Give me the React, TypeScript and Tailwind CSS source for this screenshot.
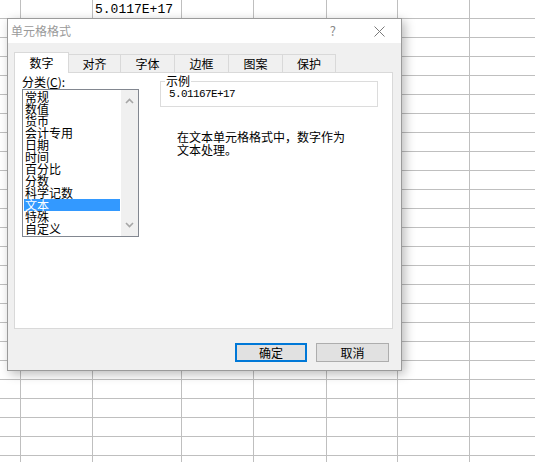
import React from 'react';

const COLS = [21, 72, 89, 72, 73, 71, 72, 120];
const ROWS = 25;

const ITEMS = ['常规', '数值', '货币', '会计专用', '日期', '时间', '百分比', '分数', '科学记数', '文本', '特殊', '自定义'];
const TABS = ['数字', '对齐', '字体', '边框', '图案', '保护'];
const TAB_W = [55, 52, 54, 54, 54, 53];

const cjk = { fontFamily: '"Noto Sans CJK SC", "Noto Sans", sans-serif' };
const mono = { fontFamily: '"Liberation Mono", "Noto Sans CJK SC", monospace' };

const Sheet: React.FC = () => (
  <div className="flex flex-col">
    {Array.from({ length: ROWS }).map((_, r) => (
      <div key={r} className="flex h-[19px] border-b border-[#bfbfbf] shrink-0">
        {COLS.map((w, c) => (
          <div
            key={c}
            className="h-full border-r border-[#bfbfbf] shrink-0 overflow-hidden"
            style={{ width: w }}
          >
            {r === 0 && c === 2 && (
              <span className="block pl-[2px] text-[13px] leading-[19px] text-black" style={mono}>
                5.0117E+17
              </span>
            )}
          </div>
        ))}
      </div>
    ))}
  </div>
);

const Chevron: React.FC<{ up?: boolean }> = ({ up }) => (
  <svg width="9" height="6" viewBox="0 0 9 6">
    <polyline
      points={up ? '1,5 4.5,1.5 8,5' : '1,1 4.5,4.5 8,1'}
      fill="none"
      stroke="#a6a6a6"
      strokeWidth="1.6"
    />
  </svg>
);

export default function App() {
  return (
    <div className="relative w-[535px] h-[462px] overflow-hidden bg-white" style={cjk}>
      <Sheet />

      {/* Format cells dialog */}
      <div className="absolute left-[7px] top-[18px] w-[395px] h-[353px] flex flex-col border border-[#9a9a9a] bg-[#f0f0f0] shadow-[3px_3px_10px_rgba(0,0,0,0.28)]">
        <div className="h-[24px] bg-white flex items-center pl-[3px] shrink-0">
          <span className="text-[12px] text-[#9a9a9a]">单元格格式</span>
          <span className="ml-auto mr-[38px] text-[13px] text-[#8a8a8a]">?</span>
          <svg width="11" height="11" viewBox="0 0 11 11" className="mr-[16px]">
            <path d="M0.5 0.5 L10.5 10.5 M10.5 0.5 L0.5 10.5" stroke="#7a7a7a" strokeWidth="1" />
          </svg>
        </div>

        <div className="flex flex-col pt-[9px] pl-[6px] pr-[8px]">
          {/* Tabs */}
          <div className="flex items-end h-[20px]">
            {TABS.map((t, i) =>
              i === 0 ? (
                <div
                  key={t}
                  className="relative z-10 -mb-px h-[21px] flex items-center justify-center bg-white border border-b-0 border-[#d9d9d9] text-[12px] text-black"
                  style={{ width: TAB_W[i] }}
                >
                  {t}
                </div>
              ) : (
                <div
                  key={t}
                  className="h-[18px] flex items-center justify-center border border-l-0 border-b-0 border-[#d9d9d9] text-[12px] text-black"
                  style={{ width: TAB_W[i] }}
                >
                  {t}
                </div>
              )
            )}
          </div>

          {/* Panel */}
          <div className="h-[257px] bg-white border border-[#d9d9d9] flex">
            <div className="flex flex-col ml-[7px] mt-[1px]">
              <div className="h-[15px] text-[12px] leading-[15px] text-black">
                分类(<span className="underline">C</span>):
              </div>
              <div className="w-[117px] h-[148px] border border-[#828790] flex">
                <div className="flex-1 flex flex-col p-[1px]">
                  {ITEMS.map((it, i) => (
                    <div
                      key={it}
                      className={`h-[12px] text-[12px] leading-[12px] pl-[1px] whitespace-nowrap ${
                        i === 9 ? 'bg-[#3399ff] text-white' : 'text-black'
                      }`}
                    >
                      {it}
                    </div>
                  ))}
                </div>
                <div className="w-[17px] bg-[#f0f0f0] flex flex-col items-center justify-between pt-[8px] pb-[8px]">
                  <Chevron up />
                  <Chevron />
                </div>
              </div>
            </div>

            <div className="flex flex-col ml-[21px] mt-[8px]">
              <div className="relative w-[218px] h-[26px] border border-[#dcdcdc]">
                <span className="absolute left-[4px] -top-[8px] bg-white px-[1px] text-[12px] leading-[14px] text-black">
                  示例
                </span>
                <div className="pl-[8px] pt-[7px] text-[11px] leading-[11px] tracking-[-0.6px] text-black" style={mono}>
                  5.01167E+17
                </div>
              </div>
              <div className="ml-[17px] mt-[23px] text-[12px] leading-[13px] text-black">
                <div>在文本单元格格式中，数字作为</div>
                <div>文本处理。</div>
              </div>
            </div>
          </div>

          {/* Buttons */}
          <div className="flex justify-end gap-[9px] mt-[14px] mr-[4px]">
            <button className="w-[72px] h-[19px] flex items-center justify-center bg-[#e1e1e1] border-2 border-[#0078d7] text-[12px] text-black">
              确定
            </button>
            <button className="w-[73px] h-[19px] flex items-center justify-center bg-[#e1e1e1] border border-[#adadad] text-[12px] text-black">
              取消
            </button>
          </div>
        </div>
      </div>
    </div>
  );
}
